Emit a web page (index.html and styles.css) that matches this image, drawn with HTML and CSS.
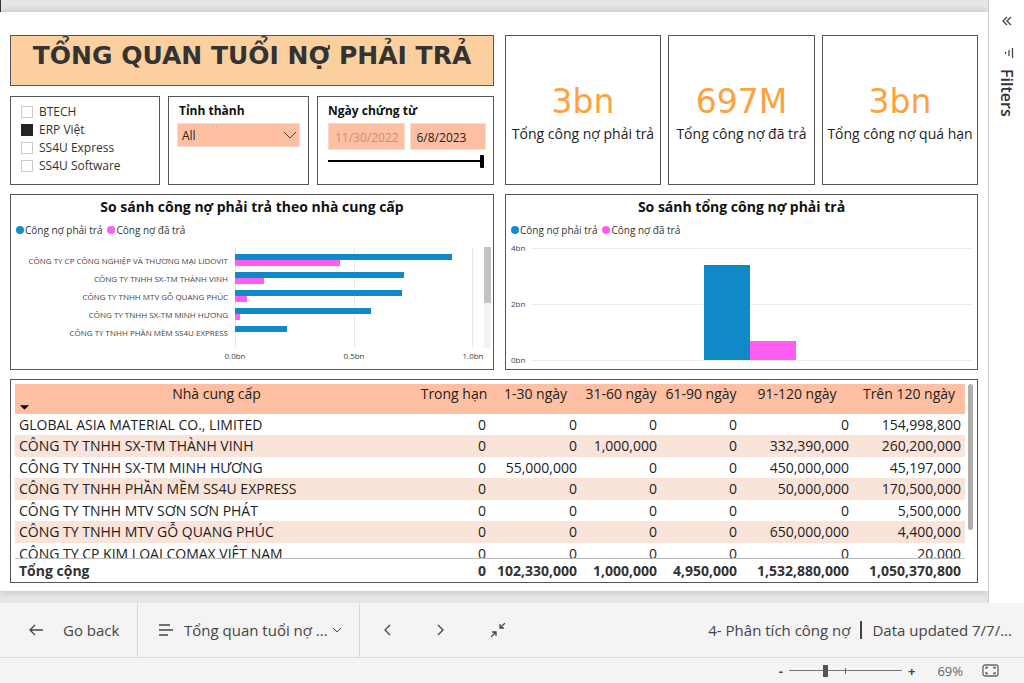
FILE: index.html
```
<!DOCTYPE html>
<html lang="vi">
<head>
<meta charset="utf-8">
<title>Tổng quan tuổi nợ phải trả</title>
<meta name="viewport" content="width=device-width, initial-scale=1">
<link rel="stylesheet" href="styles.css">
</head>
<body>
<div class="app">
  <div class="workspace">
    <main class="stage">
      <div class="report">
        <section class="top">
          <div class="top-left">
            <h1 class="panel title">TỔNG QUAN TUỔI NỢ PHẢI TRẢ</h1>
            <div class="slicers">
              <div class="panel checks">
                <label><input type="checkbox">BTECH</label>
                <label><input type="checkbox" checked>ERP Việt</label>
                <label><input type="checkbox">SS4U Express</label>
                <label><input type="checkbox">SS4U Software</label>
              </div>
              <div class="panel slicer">
                <label class="slicer-name" for="province">Tỉnh thành</label>
                <div class="select-wrap">
                  <select id="province"><option>All</option></select>
                  <svg class="select-arrow" viewBox="0 0 14 8" aria-hidden="true"><path d="M1 1l6 6 6-6"/></svg>
                </div>
              </div>
              <div class="panel slicer">
                <label class="slicer-name" for="from">Ngày chứng từ</label>
                <div class="dates">
                  <input id="from" type="text" value="11/30/2022" disabled>
                  <input type="text" value="6/8/2023" aria-label="Đến ngày">
                </div>
                <input class="date-range" type="range" min="0" max="100" value="100" aria-label="Khoảng ngày">
              </div>
            </div>
          </div>
          <div class="kpis">
            <div class="panel kpi"><strong>3bn</strong><span>Tổng công nợ phải trả</span></div>
            <div class="panel kpi"><strong>697M</strong><span>Tổng công nợ đã trả</span></div>
            <div class="panel kpi"><strong>3bn</strong><span>Tổng công nợ quá hạn</span></div>
          </div>
        </section>

        <section class="charts">
          <div class="panel chart">
            <h2>So sánh công nợ phải trả theo nhà cung cấp</h2>
            <div class="legend"><span class="key due">Công nợ phải trả</span><span class="key paid">Công nợ đã trả</span></div>
            <div class="hbar">
              <div class="hbar-names">
                <span>CÔNG TY CP CÔNG NGHIỆP VÀ THƯƠNG MẠI LIDOVIT</span>
                <span>CÔNG TY TNHH SX-TM THÀNH VINH</span>
                <span>CÔNG TY TNHH MTV GỖ QUANG PHÚC</span>
                <span>CÔNG TY TNHH SX-TM MINH HƯƠNG</span>
                <span>CÔNG TY TNHH PHẦN MỀM SS4U EXPRESS</span>
              </div>
              <div class="hbar-plot">
                <div class="hbar-grid"><i></i><i></i></div>
                <div class="hbar-bars">
                  <div><b class="due-bar" style="width:91%"></b><b class="paid-bar" style="width:44%"></b></div>
                  <div><b class="due-bar" style="width:71%"></b><b class="paid-bar" style="width:12%"></b></div>
                  <div><b class="due-bar" style="width:70%"></b><b class="paid-bar" style="width:5%"></b></div>
                  <div><b class="due-bar" style="width:57%"></b><b class="paid-bar" style="width:2%"></b></div>
                  <div><b class="due-bar" style="width:22%"></b><b class="paid-bar" style="width:0%"></b></div>
                </div>
              </div>
              <div class="hbar-scroll"><i></i></div>
              <div class="hbar-axis"><span>0.0bn</span><span>0.5bn</span><span>1.0bn</span></div>
            </div>
          </div>
          <div class="panel chart">
            <h2>So sánh tổng công nợ phải trả</h2>
            <div class="legend"><span class="key due">Công nợ phải trả</span><span class="key paid">Công nợ đã trả</span></div>
            <div class="vbar">
              <div class="vbar-lines"><span>4bn</span><span>2bn</span><span>0bn</span></div>
              <div class="vbar-bars"><b class="due-bar" style="height:85%"></b><b class="paid-bar" style="height:17%"></b></div>
            </div>
          </div>
        </section>

        <section class="panel aging">
          <div class="aging-view">
            <table>
              <colgroup><col><col class="c-0"><col class="c-30"><col class="c-60"><col class="c-60"><col class="c-120"><col class="c-120"></colgroup>
              <thead><tr><th>Nhà cung cấp<svg class="sort" viewBox="0 0 10 5" aria-hidden="true"><path d="M0 0h10l-5 5z"/></svg></th><th>Trong hạn</th><th>1-30 ngày</th><th>31-60 ngày</th><th>61-90 ngày</th><th>91-120 ngày</th><th>Trên 120 ngày</th></tr></thead>
              <tbody>
                <tr><td>GLOBAL ASIA MATERIAL CO., LIMITED</td><td>0</td><td>0</td><td>0</td><td>0</td><td>0</td><td>154,998,800</td></tr>
                <tr><td>CÔNG TY TNHH SX-TM THÀNH VINH</td><td>0</td><td>0</td><td>1,000,000</td><td>0</td><td>332,390,000</td><td>260,200,000</td></tr>
                <tr><td>CÔNG TY TNHH SX-TM MINH HƯƠNG</td><td>0</td><td>55,000,000</td><td>0</td><td>0</td><td>450,000,000</td><td>45,197,000</td></tr>
                <tr><td>CÔNG TY TNHH PHẦN MỀM SS4U EXPRESS</td><td>0</td><td>0</td><td>0</td><td>0</td><td>50,000,000</td><td>170,500,000</td></tr>
                <tr><td>CÔNG TY TNHH MTV SƠN SƠN PHÁT</td><td>0</td><td>0</td><td>0</td><td>0</td><td>0</td><td>5,500,000</td></tr>
                <tr><td>CÔNG TY TNHH MTV GỖ QUANG PHÚC</td><td>0</td><td>0</td><td>0</td><td>0</td><td>650,000,000</td><td>4,400,000</td></tr>
                <tr><td>CÔNG TY CP KIM LOẠI COMAX VIỆT NAM</td><td>0</td><td>0</td><td>0</td><td>0</td><td>0</td><td>20,000</td></tr>
              </tbody>
              <tfoot><tr><td>Tổng cộng</td><td>0</td><td>102,330,000</td><td>1,000,000</td><td>4,950,000</td><td>1,532,880,000</td><td>1,050,370,800</td></tr></tfoot>
            </table>
          </div>
          <div class="aging-scroll"><i></i></div>
        </section>
      </div>
    </main>
    <aside class="filters">
      <button type="button" aria-label="Expand"><svg width="10" height="10" viewBox="0 0 10 10"><path d="M5 1L1 5l4 4M9 1L5 5l4 4"/></svg></button>
      <svg class="filter-icon" width="10" height="12" viewBox="0 0 10 12" aria-hidden="true"><path d="M8.500 1v10M5 3v6M1.500 5v2"/></svg>
      <h2>Filters</h2>
    </aside>
  </div>

  <nav class="navbar">
    <button class="back" type="button"><svg width="14" height="12" viewBox="0 0 14 12"><path d="M14 6H1M6 1L1 6l5 5"/></svg>Go back</button>
    <button class="pages" type="button"><svg width="14" height="12" viewBox="0 0 14 12"><path d="M0 1h11M0 6h14M0 11h9"/></svg><span>Tổng quan tuổi nợ ...</span><svg class="thin" width="10" height="6" viewBox="0 0 10 6"><path d="M1 1l4 4 4-4"/></svg></button>
    <div class="pager">
      <button type="button" aria-label="Previous"><svg width="8" height="12" viewBox="0 0 8 12"><path d="M7 1L2 6l5 5"/></svg></button>
      <button type="button" aria-label="Next"><svg width="8" height="12" viewBox="0 0 8 12"><path d="M1 1l5 5-5 5"/></svg></button>
      <button type="button" aria-label="Exit full screen"><svg width="14" height="14" viewBox="0 0 14 14"><path d="M14 0L9 5M9 1v4h4M0 14l5-5M1 9h4v4"/></svg></button>
    </div>
    <div class="info"><span>4- Phân tích công nợ</span><i></i><span>Data updated 7/7/...</span></div>
  </nav>

  <footer class="zoombar">
    <button type="button" aria-label="Zoom out">-</button>
    <input class="zoom-range" type="range" min="0" max="100" value="32" aria-label="Zoom">
    <button type="button" aria-label="Zoom in">+</button>
    <output>69%</output>
    <button type="button" aria-label="Fit to page"><svg width="17" height="13" viewBox="0 0 17 13"><rect x="1" y="1" width="15" height="11" rx="2"/><path d="M4 5V3.500h2M11 3.500h2V5M13 8v1.500h-2M6 9.500H4V8"/></svg></button>
  </footer>
</div>
</body>
</html>
```
FILE: styles.css
```
* { box-sizing: border-box; }
body { margin: 0; font-family: "Open Sans", "Noto Sans", sans-serif; color: #222; background: #f4f4f4; }
button, input, select { font: inherit; color: inherit; margin: 0; padding: 0; border: 0; border-radius: 0; background: none; }
h1, h2 { margin: 0; }
svg { fill: none; stroke: #444; stroke-width: 1.3; flex: none; }
.app { display: flex; flex-direction: column; min-height: 100vh; }
.workspace { flex: 1; display: flex; }
.stage { flex: 1; min-width: 0; display: flex; padding: 12px 0; background: linear-gradient(#333, #333) 0 0 / 1px 12px no-repeat #e6e6e6; }
.report { flex: 1; min-width: 0; display: grid; grid-template-rows: 150px 176px 1fr; gap: 9px; padding: 23px 10px 8px; background: #fff; box-shadow: 0 0 8px rgba(0,0,0,.2); clip-path: inset(-12px 0 -12px 0); }
.panel { border: 1px solid #555; background: #fff; min-width: 0; }
.top, .charts { display: grid; grid-template-columns: 484fr 473fr; gap: 11px; }
.top-left { display: grid; grid-template-rows: 51px 1fr; gap: 10px; min-width: 0; }
.title { background: #fbd09e; color: #333; font: bold 25px/40px "DejaVu Sans", sans-serif; text-align: center; white-space: nowrap; }
.slicers { display: grid; grid-template-columns: 150fr 141fr 177fr; gap: 8px; }
.checks { padding: 6px 10px; font-size: 12px; line-height: 18px; color: #333; }
.checks label { display: flex; align-items: center; gap: 6px; white-space: nowrap; }
.checks input { appearance: none; width: 12px; height: 12px; border: 1px solid #ccc; }
.checks input:checked { background: #252423; border-color: #252423; }
.slicer { padding: 5px 8px; display: flex; flex-direction: column; }
.slicer + .slicer { padding: 5px 7px 5px 10px; }
.slicer-name { font-size: 12px; line-height: 18px; font-weight: bold; color: #111; margin-bottom: 3px; }
.slicer:nth-child(2) .slicer-name { padding-left: 2px; }
.select-wrap { position: relative; display: flex; }
.select-wrap select { flex: 1; appearance: none; height: 24px; padding: 1px 0 0 4px; background: #ffbfa3; border: 1px solid #f5dbd0; font-size: 12px; }
.select-arrow { position: absolute; right: 3px; top: 8px; width: 14px; height: 8px; stroke-width: 1; pointer-events: none; }
.dates { display: grid; grid-template-columns: 1fr 1fr; gap: 5px; }
.dates input { width: 100%; height: 27px; padding: 1px 6px 0; background: #ffbfa3; border: 1px solid #f5dbd0; font-size: 12px; }
.dates input:disabled { color: #c98f7a; }
.date-range { appearance: none; height: 14px; margin: 4px 2px 0 0; background: linear-gradient(#000, #000) center / 100% 2px no-repeat; }
.date-range::-webkit-slider-thumb { appearance: none; width: 4px; height: 13px; border-radius: 1px; background: #000; }
.kpis { display: grid; grid-template-columns: 156fr 147fr 156fr; gap: 7px; }
.kpi { display: flex; flex-direction: column; align-items: center; justify-content: center; padding-top: 7px; white-space: nowrap; }
.kpi strong { font: 33px/40px "DejaVu Sans", sans-serif; color: #fba341; }
.kpi span { font-size: 14px; line-height: 24px; }

.chart { display: flex; flex-direction: column; }
.chart h2 { font-size: 14px; line-height: 24px; text-align: center; color: #111; }
.legend { display: flex; gap: 5px; padding: 3px 5px 0; font-size: 10px; line-height: 16px; color: #333; }
.key { display: flex; align-items: center; gap: 1px; }
.key::before { content: ""; width: 8px; height: 8px; border-radius: 50%; background: #118dc8; }
.key.paid::before { background: #ff5cf4; }
.due-bar { background: #0f8ac6; }
.paid-bar { background: #ff5cf4; }
.hbar { display: grid; grid-template-columns: 217px 1fr 7px; column-gap: 7px; grid-template-rows: 101px 14px; margin: 9px 2px 0 0; font-size: 8px; color: #444; }
.hbar-names { display: flex; flex-direction: column; align-items: flex-end; padding-top: 5px; white-space: nowrap; }
.hbar-names span { line-height: 18px; }
.hbar-plot, .hbar-axis { margin-right: 4px; }
.hbar-plot { display: grid; }
.hbar-grid, .hbar-bars { grid-area: 1 / 1; }
.hbar-grid { display: flex; }
.hbar-grid i { flex: 1; border-left: 1px solid #e8e8e8; }
.hbar-grid i:last-child { border-right: 1px solid #e8e8e8; }
.hbar-bars { padding-top: 7px; }
.hbar-bars div { height: 18px; }
.hbar-bars b { display: block; height: 6px; }
.hbar-scroll { background: #f3f3f3; }
.hbar-scroll i { display: block; height: 55%; background: #c3c3c3; }
.hbar-axis { grid-area: 2 / 2; display: flex; justify-content: space-between; margin-left: -20px; margin-right: -16px; line-height: 16px; }
.hbar-axis span { width: 40px; text-align: center; }
.vbar { display: grid; margin: 4px 4px 0 5px; height: 124px; font-size: 8px; color: #444; }
.vbar-lines, .vbar-bars { grid-area: 1 / 1; }
.vbar-lines { display: flex; flex-direction: column; justify-content: space-between; }
.vbar-lines span { display: flex; align-items: center; line-height: 12px; }
.vbar-lines span::before { content: ""; order: 2; flex: 1; height: 1px; background: #ececec; margin-left: 6px; }
.vbar-bars { display: flex; align-items: flex-end; justify-content: center; padding: 6px 0; margin-left: 16px; }
.vbar-bars b { width: 46px; }

.aging { display: flex; padding: 4px 4px 0; }
.aging-view { flex: 1; min-width: 0; height: 198px; overflow: hidden; }
.aging table { width: 100%; table-layout: fixed; border-spacing: 0; font-size: 14px; line-height: 20px; white-space: nowrap; }
.c-0 { width: 72px; }
.c-30 { width: 91px; }
.c-60 { width: 80px; }
.c-120 { width: 112px; }
.aging th, .aging td { padding: 0 4px; height: 21px; text-align: right; }
.aging td:first-child { text-align: left; }
.aging th { position: relative; height: 30px; padding: 0; font-weight: normal; text-align: center; vertical-align: top; background: #ffbfa3; }
.sort { position: absolute; left: 5px; bottom: 4px; width: 9px; height: 5px; fill: #000; stroke: none; }
.aging tbody tr:nth-child(even) td { height: 22px; background: #fae3d9; }
.aging tfoot td { position: sticky; bottom: 0; height: 24px; font-weight: bold; background: #fff; border-top: 1px solid #bbb; color: #333; }
.aging-scroll { width: 5px; margin-left: 3px; }
.aging-scroll i { display: block; height: 146px; border-radius: 3px; background: #b0aeac; }

.filters { width: 36px; display: flex; flex-direction: column; align-items: center; padding-top: 16px; border-left: 1px solid #ccc; background: #fff; }
.filters button { display: flex; height: 10px; }
.filter-icon { margin: 21px 0 0 5px; }
.filters h2 { margin-top: 10px; writing-mode: vertical-rl; font-size: 16px; line-height: 20px; font-weight: 600; color: #333; }

.navbar { display: flex; height: 55px; background: #f4f4f4; border-bottom: 1px solid #ddd; font-size: 15px; color: #444; white-space: nowrap; }
.navbar button { display: flex; align-items: center; }
.back { width: 138px; padding-left: 29px; gap: 20px; }
.navbar .back { padding-left: 29px; }
.navbar .pages { padding-left: 21px; }
.navbar .back, .navbar .pages { border-right: 1px solid #d8d8d8; }
.pages { width: 222px; }
.pages span { margin: 0 4px 0 11px; }
.thin { stroke-width: 1; }
.pager { display: flex; gap: 46px; padding-left: 23px; }
.info { flex: 1; display: flex; align-items: center; justify-content: flex-end; gap: 10px; padding-right: 12px; }
.info i { width: 2px; height: 18px; background: #444; }
.zoombar { display: flex; align-items: center; justify-content: flex-end; height: 25px; padding-right: 25px; font-size: 13px; color: #666; }
.zoombar button { display: flex; font-weight: bold; color: #444; }
.zoombar svg { stroke: #666; }
.zoom-range { appearance: none; width: 113px; height: 14px; margin: 0 6px; background: linear-gradient(#666, #666) 56px center / 1px 6px no-repeat, linear-gradient(#777, #777) center / 100% 1px no-repeat; }
.zoom-range::-webkit-slider-thumb { appearance: none; width: 5px; height: 12px; background: #555; }
.zoombar output { margin: 0 19px 0 22px; }
```
